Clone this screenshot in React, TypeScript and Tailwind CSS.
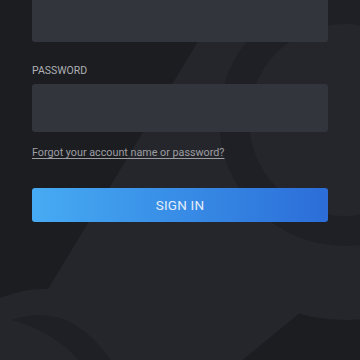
import React from "react";

function SteamBg() {
  return (
    <svg className="absolute inset-0" width="360" height="360" viewBox="0 0 360 360">
      <rect width="360" height="360" fill="#1c1d21" />
      <g fill="#25262b">
        <circle cx="345" cy="150" r="170" />
        <path d="M205 30 L360 30 L360 292 Q330 294 313 302 L228 372 L0 372 L0 298 Q25 288 48 289 Z" />
      </g>
      <path d="M345 120 m-126 0 a126 126 0 1 0 252 0 a126 126 0 1 0 -252 0 Z M345 120 m-96 0 a96 96 0 1 1 192 0 a96 96 0 1 1 -192 0 Z" fill="#1f2025" fillRule="evenodd" />
      <path d="M12 320 Q70 300 112 362 L80 362 Q55 332 12 320 Z" fill="#1f2025" />
    </svg>
  );
}

export default function App() {
  return (
    <div className="relative w-[360px] h-[360px] overflow-hidden bg-[#1c1d21]" style={{ fontFamily: "Roboto, 'Noto Sans', sans-serif" }}>
      <SteamBg />
      <div className="relative flex flex-col px-8">
        <div className="-mt-[6px] h-[48px] rounded-[3px] bg-[#32353c]" />
        <div className="mt-[22px] text-[10.5px] leading-[14px] text-[#afb0b3]">PASSWORD</div>
        <div className="mt-[6px] h-[48px] rounded-[3px] bg-[#32353c]" />
        <div className="mt-[13px] text-[10.75px] leading-[16px] text-[#9c9da1] underline underline-offset-2">
          Forgot your account name or password?
        </div>
        <button className="mt-[27px] h-[34px] rounded-[3px] bg-gradient-to-r from-[#47abf3] to-[#2c6dd8] text-[13.5px] text-[#e3edf8] tracking-[0.2px]">
          SIGN IN
        </button>
      </div>
    </div>
  );
}
